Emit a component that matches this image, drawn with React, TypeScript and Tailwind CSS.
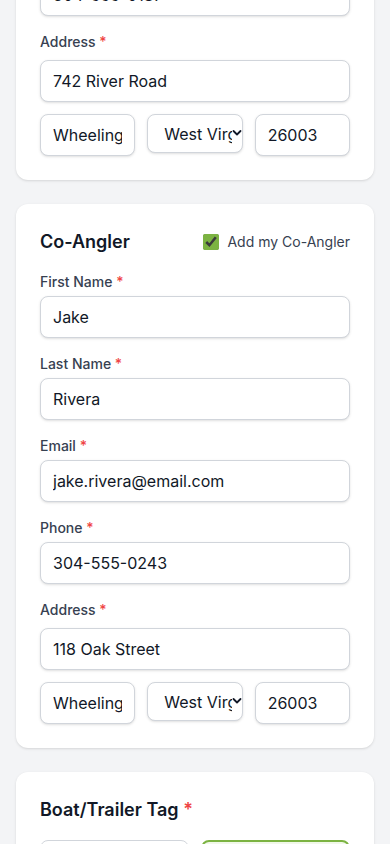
import React from "react";

const font = { fontFamily: "Inter, 'Noto Sans', sans-serif" };

function Label({ children, spaced }: { children: React.ReactNode; spaced?: boolean }) {
  return (
    <label className={`block text-sm font-medium leading-5 text-[#374151] ${spaced ? "mb-2" : "mb-1"}`}>
      {children} <span className="text-[#ef4444]">*</span>
    </label>
  );
}

function TextInput({ value }: { value: string }) {
  return (
    <input
      type="text"
      defaultValue={value}
      className="block h-[42px] w-full min-w-0 rounded-lg border border-[#d1d5db] bg-white px-3 text-base text-[#111827] shadow-sm outline-none"
    />
  );
}

function Field({ label, value, spaced }: { label: string; value: string; spaced?: boolean }) {
  return (
    <div>
      <Label spaced={spaced}>{label}</Label>
      <TextInput value={value} />
    </div>
  );
}

interface Person {
  first: string;
  last: string;
  email: string;
  phone: string;
  address: string;
}

function AddressRow() {
  return (
    <div className="mt-3 grid grid-cols-3 items-start gap-3">
      <TextInput value="Wheeling" />
      <div className="relative">
        <select
          defaultValue="WV"
          className="block h-[39px] w-full min-w-0 appearance-none rounded-lg border border-[#d1d5db] bg-white pl-4 pr-[10px] text-base text-[#111827] shadow-sm outline-none"
        >
          <option value="WV">West Virginia</option>
          <option value="OH">Ohio</option>
          <option value="PA">Pennsylvania</option>
        </select>
        {/* chevron */}
        <svg
          className="pointer-events-none absolute right-[1px] top-[15px] h-[8px] w-[10px]"
          viewBox="0 0 10 8"
          fill="none"
        >
          <path d="M1.5 2 L5 5.5 L8.5 2" stroke="#111827" strokeWidth="1.8" strokeLinecap="round" strokeLinejoin="round" />
        </svg>
      </div>
      <TextInput value="26003" />
    </div>
  );
}

function PersonFields({ p }: { p: Person }) {
  return (
    <div className="flex flex-col gap-4">
      <Field label="First Name" value={p.first} />
      <Field label="Last Name" value={p.last} />
      <Field label="Email" value={p.email} />
      <Field label="Phone" value={p.phone} />
      <div>
        <Label spaced>Address</Label>
        <TextInput value={p.address} />
        <AddressRow />
      </div>
    </div>
  );
}

const angler: Person = {
  first: "Mark",
  last: "Thompson",
  email: "mark.thompson@email.com",
  phone: "304-555-0187",
  address: "742 River Road",
};

const coAngler: Person = {
  first: "Jake",
  last: "Rivera",
  email: "jake.rivera@email.com",
  phone: "304-555-0243",
  address: "118 Oak Street",
};

export default function App() {
  return (
    <div className="min-h-screen overflow-hidden bg-[#f3f4f6]" style={font}>
      <div className="-mt-[364px] flex flex-col gap-6 px-4 pb-10">
        {/* Angler (scrolled mostly out of view) */}
        <div className="rounded-xl bg-white p-6 shadow-sm">
          <h2 className="mb-4 text-lg font-semibold leading-7 text-[#111827]">Angler</h2>
          <PersonFields p={angler} />
        </div>

        {/* Co-Angler */}
        <div className="rounded-xl bg-white p-6 shadow-sm">
          <div className="mb-4 flex items-center justify-between">
            <h2 className="text-lg font-semibold leading-7 text-[#111827]">Co-Angler</h2>
            <label className="flex items-center gap-2 text-sm text-[#374151]">
              <input type="checkbox" defaultChecked className="h-4 w-4 accent-[#7cb342]" />
              Add my Co-Angler
            </label>
          </div>
          <PersonFields p={coAngler} />
        </div>

        {/* Boat/Trailer Tag */}
        <div className="rounded-xl bg-white p-6 shadow-sm">
          <h2 className="mb-4 text-lg font-semibold leading-7 text-[#111827]">
            Boat/Trailer Tag <span className="text-[#ef4444]">*</span>
          </h2>
          <div className="grid grid-cols-2 gap-3">
            <button className="flex h-20 flex-col items-center justify-center rounded-lg border border-[#d1d5db] bg-white text-sm font-medium text-[#374151]">
              No Tag
            </button>
            <button className="flex h-20 flex-col items-center justify-center rounded-lg border-2 border-[#7cb342] bg-[#f1f8e9] text-sm font-medium text-[#33691e]">
              Tag Number
            </button>
          </div>
        </div>
      </div>
    </div>
  );
}
